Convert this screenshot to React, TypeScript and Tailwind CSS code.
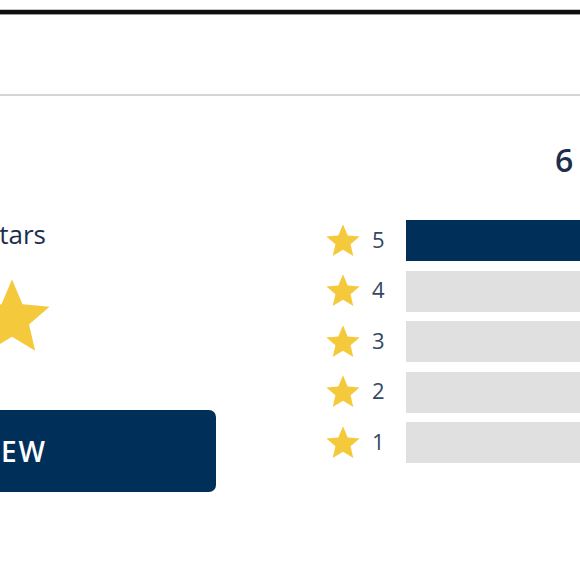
const STAR_PATH = "M12 17.27L18.18 21l-1.64-7.03L22 9.24l-7.19-.61L12 2 9.19 8.63 2 9.24l5.46 4.73L5.82 21z";

function Star({ className }: { className: string }) {
  return (
    <svg viewBox="0 0 24 24" className={className} aria-hidden>
      <path d={STAR_PATH} fill="#f5c93c" />
    </svg>
  );
}

const rows = [
  { stars: 5, pct: 100 },
  { stars: 4, pct: 0 },
  { stars: 3, pct: 0 },
  { stars: 2, pct: 0 },
  { stars: 1, pct: 0 },
];

export default function App() {
  return (
    <div className="h-[580px] w-[580px] overflow-hidden bg-white font-['Open_Sans','Noto_Sans',sans-serif]">
      <div className="h-[9px]" />
      <div className="h-[1px] bg-[#c4c4c4]" />
      <div className="h-[4px] bg-[#0e0e0e]" />
      <div className="h-[1px] bg-[#9a9a9a]" />
      <div className="h-[79px]" />
      <div className="h-[2px] bg-[#d4d4d4]" />

      <div className="flex">
        {/* summary column, most of it lies left of the visible area */}
        <div className="-ml-[300px] flex w-[516px] shrink-0 flex-col pt-[122px]">
          <div className="flex justify-end pr-[170px] text-[26px] leading-[32px] whitespace-nowrap text-[#1c2e4b]">
            5.0 out of 5 stars
          </div>
          <div className="mt-[22px] flex justify-end pr-[159px]">
            {[0, 1, 2, 3, 4].map((i) => (
              <Star key={i} className="h-[90px] w-[90px] shrink-0" />
            ))}
          </div>
          <button
            type="button"
            className="mt-[48px] flex h-[82px] items-center justify-end rounded-[7px] bg-[#002f5a] pr-[169px] text-[28px] font-semibold tracking-[2px] whitespace-nowrap text-white"
          >
            WRITE A REVIEW
          </button>
        </div>

        {/* distribution column */}
        <div className="ml-[107px] flex w-[460px] shrink-0 flex-col pt-[47px]">
          <div className="pl-[232px] text-[32px] leading-[34px] font-semibold whitespace-nowrap text-[#1c2e4b]">
            6 Reviews
          </div>
          <div className="mt-[43px] flex flex-col gap-[9.5px]">
            {rows.map((r) => (
              <div key={r.stars} className="flex h-[41px] items-center">
                <Star className="h-[40px] w-[40px] shrink-0" />
                <div className="ml-[9px] w-[34px] shrink-0 pb-[3px] text-[22px] text-[#34495f]">{r.stars}</div>
                <div className="h-[41px] flex-1 bg-[#e0e0e0]">
                  <div className="h-full bg-[#002f5a]" style={{ width: `${r.pct}%` }} />
                </div>
              </div>
            ))}
          </div>
        </div>
      </div>
    </div>
  );
}
